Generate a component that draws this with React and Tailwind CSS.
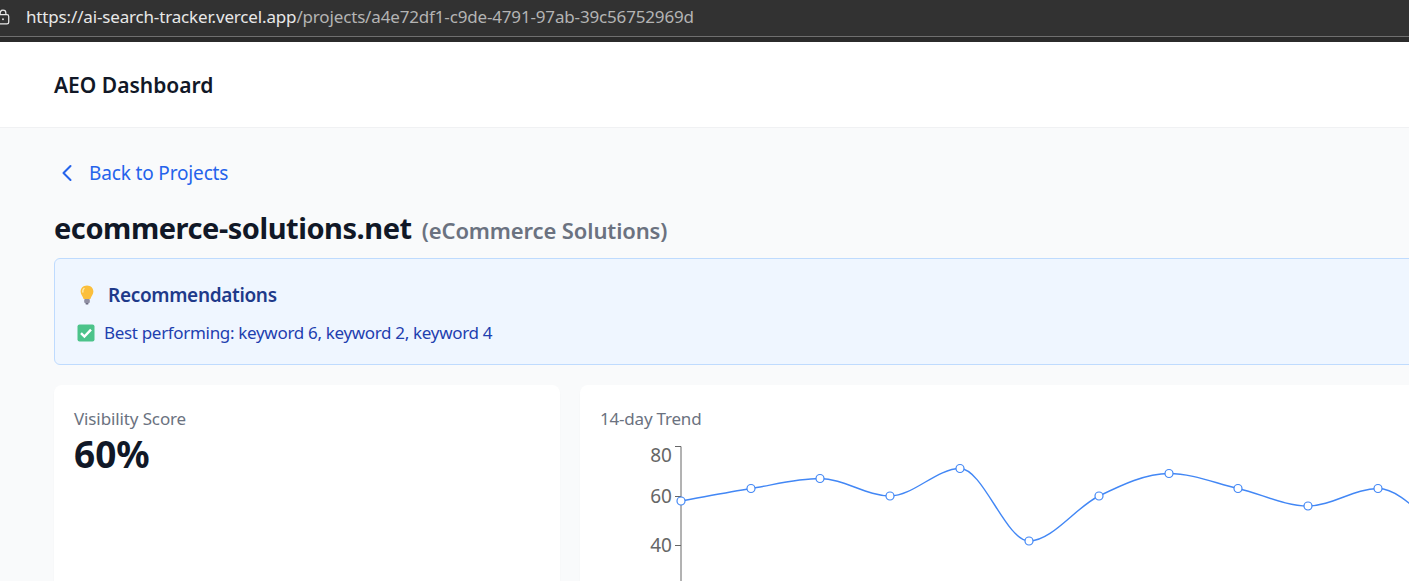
import React from "react";
import { ChevronLeft } from "lucide-react";

// puntos de la tendencia, en coordenadas del svg
const puntos = [
  [81, 61], [151, 48.5], [220, 38.5], [290, 56], [360, 28.5], [429, 101],
  [499, 56], [569, 33.5], [638, 48.5], [708, 66], [778, 48.5], [848, 96],
];

// curva monotona igual a la que usa la libreria de graficos
const curvaMonotona = (pts) => {
  const n = pts.length;
  const d = [];
  const m = [];
  for (let i = 0; i < n - 1; i++) {
    d.push((pts[i + 1][1] - pts[i][1]) / (pts[i + 1][0] - pts[i][0]));
  }
  m[0] = d[0];
  m[n - 1] = d[n - 2];
  for (let i = 1; i < n - 1; i++) {
    const h0 = pts[i][0] - pts[i - 1][0];
    const h1 = pts[i + 1][0] - pts[i][0];
    const s = (d[i - 1] * h1 + d[i] * h0) / (h0 + h1);
    m[i] = (Math.sign(d[i - 1]) + Math.sign(d[i])) * Math.min(Math.abs(d[i - 1]), Math.abs(d[i]), 0.5 * Math.abs(s));
  }
  let path = `M${pts[0][0]},${pts[0][1]}`;
  for (let i = 0; i < n - 1; i++) {
    const h = (pts[i + 1][0] - pts[i][0]) / 3;
    path += `C${pts[i][0] + h},${pts[i][1] + m[i] * h},${pts[i + 1][0] - h},${pts[i + 1][1] - m[i + 1] * h},${pts[i + 1][0]},${pts[i + 1][1]}`;
  }
  return path;
};

const LockIcon = () => (
  <svg width="14" height="16" viewBox="0 0 12 14" fill="none" stroke="#e8e8e8" strokeWidth="1.1" className="shrink-0 ml-[-4px]">
    <rect x="1" y="5" width="10" height="8" rx="1.5" />
    <path d="M3.5 5V3.5a2.5 2.5 0 0 1 5 0V5" />
    <circle cx="6" cy="9" r="0.8" fill="#e8e8e8" stroke="none" />
  </svg>
);

const BulbIcon = () => (
  <svg width="18" height="20" viewBox="0 0 18 20" className="shrink-0">
    <path d="M9 0.5C5 0.5 2.6 3.4 2.6 6.6c0 3 2.2 4.4 3 7.4h6.8c.8-3 3-4.4 3-7.4C15.4 3.4 13 .5 9 .5z" fill="#fbbf3c" />
    <path d="M6 3.5C5 4.4 4.6 5.6 4.8 7" stroke="#fde9a8" strokeWidth="1.4" fill="none" strokeLinecap="round" />
    <rect x="6.2" y="14" width="5.6" height="4" rx="1" fill="#8f8fa3" />
    <rect x="7.4" y="18" width="3.2" height="1.6" rx="0.8" fill="#6b6b80" />
  </svg>
);

const CheckIcon = () => (
  <svg width="18" height="18" viewBox="0 0 18 18" className="shrink-0 ml-[-1px] mr-[1px]">
    <rect x="0.5" y="0.5" width="17" height="17" rx="2" fill="#4cc38a" />
    <path d="M4 9.2l3.4 3.4L14 5.6" stroke="#fff" strokeWidth="2.4" fill="none" />
  </svg>
);

const TrendChart = () => (
  <svg width="810" height="142" viewBox="0 0 810 142" className="block mt-[9px] overflow-hidden">
    <g stroke="#666" fill="none">
      <path d="M81 6.5V142" />
      <path d="M75 6.5H81M75 56.5H81M75 105.5H81" />
    </g>
    <g fill="#666" fontSize="19" textAnchor="end" fontFamily="'Noto Sans', sans-serif">
      <text x="72" y="22">80</text>
      <text x="72" y="63">60</text>
      <text x="72" y="112">40</text>
    </g>
    <path d={curvaMonotona(puntos)} fill="none" stroke="#4287f5" strokeWidth="1.4" />
    {puntos.slice(0, 11).map(([x, y]) => (
      <circle key={x} cx={x} cy={y} r="4" fill="#fff" stroke="#4287f5" strokeWidth="1.2" />
    ))}
  </svg>
);

export default function App() {
  return (
    <div className="w-[1409px] h-[581px] overflow-hidden bg-[#f9fafb] font-['Noto_Sans',sans-serif]">
      <div className="h-[42px] bg-[#323232] border-b-[5px] border-[#2b2b2b]">
        <div className="h-[37px] border-b border-[#6f6f6f] flex items-center gap-[3px] pb-[3px]">
          <LockIcon />
          <span className="ml-[13px] text-[17px] text-[#e8e8e8] tracking-[-0.16px] whitespace-nowrap">
            https://ai-search-tracker.vercel.app<span className="text-[#b4b4b4]">/projects/a4e72df1-c9de-4791-97ab-39c56752969d</span>
          </span>
        </div>
      </div>

      <header className="h-[86px] bg-white border-b border-[#f0f1f3] flex items-center px-[54px] pt-[2px]">
        <h1 className="text-[21px] font-semibold text-[#111827]">AEO Dashboard</h1>
      </header>

      <main className="w-[1666px] px-[54px]">
        <a className="flex items-center mt-[30px] h-[30px] text-[#2563eb] text-[19px] tracking-[-0.15px]">
          <ChevronLeft size={28} strokeWidth={1.75} className="ml-[-1.5px] mr-[8.5px]" />
          Back to Projects
        </a>

        <div className="flex items-baseline mt-[18px] h-[35px]">
          <h2 className="text-[29px] font-bold text-[#111827] tracking-[-0.45px]">ecommerce-solutions.net</h2>
          <span className="ml-[10px] text-[22px] font-semibold text-[#6b7280] tracking-[-0.12px]">(eCommerce Solutions)</span>
        </div>

        <section className="mt-[17px] h-[107px] bg-[#eff6ff] border border-[#bfdbfe] rounded-[6px] pl-[23px] pt-[25px]">
          <div className="flex items-center h-[22px]">
            <BulbIcon />
            <h3 className="ml-[12px] text-[19px] font-semibold text-[#1e3a8a] tracking-[-0.33px]">Recommendations</h3>
          </div>
          <div className="flex items-center mt-[16px] h-[22px]">
            <CheckIcon />
            <p className="ml-[8px] text-[17px] text-[#1e40af] tracking-[-0.32px]">Best performing: keyword 6, keyword 2, keyword 4</p>
          </div>
        </section>

        <div className="grid grid-cols-3 gap-5 mt-[20px]">
          <div className="bg-white rounded-[8px] h-[300px] shadow-[0_1px_2px_rgba(0,0,0,0.03)] pl-[20px] pt-[22px]">
            <p className="text-[17px] leading-[24px] text-[#6b7280] tracking-[-0.12px]">Visibility Score</p>
            <p className="text-[37px] leading-[40px] mt-[3px] font-bold text-[#111827]">60%</p>
          </div>
          <div className="col-span-2 bg-white rounded-[8px] h-[300px] shadow-[0_1px_2px_rgba(0,0,0,0.03)] pl-[20px] pt-[22px]">
            <p className="text-[17px] leading-[24px] text-[#6b7280] tracking-[-0.2px]">14-day Trend</p>
            <TrendChart />
          </div>
        </div>
      </main>
    </div>
  );
}
